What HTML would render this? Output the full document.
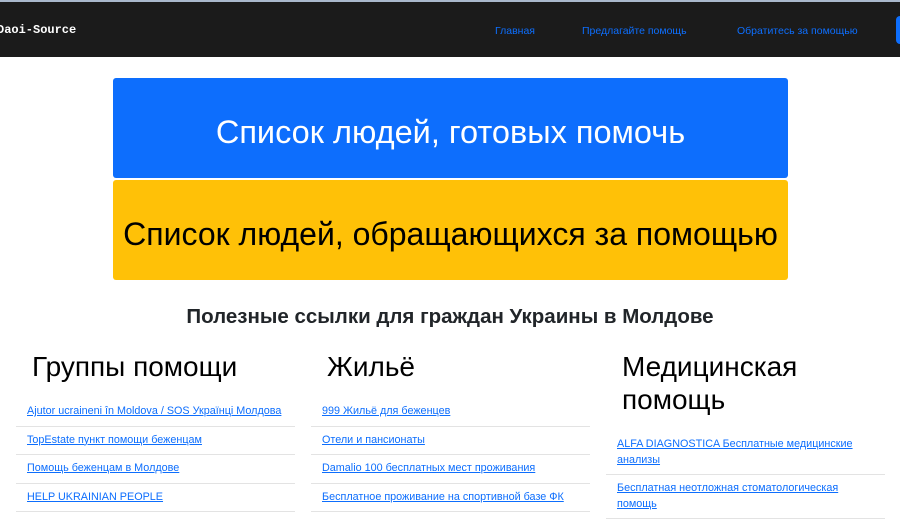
<!DOCTYPE html>
<html><head><meta charset="utf-8"><style>
*{margin:0;padding:0;box-sizing:border-box}
body{width:900px;height:505px;overflow:hidden;background:#fff;font-family:"Liberation Sans","DejaVu Sans",sans-serif;position:relative}
.nav{position:absolute;left:0;top:0;width:900px;height:57px;background:#1b1b1b;border-top:2px solid #a9b8cc}
.brand{position:absolute;left:-3px;top:21px;color:#fff;font:bold 12px "Liberation Mono",monospace}
.nav a{position:absolute;top:23px;color:#0d6efd;font-size:10.5px;text-decoration:none}
.btn{position:absolute;left:896px;top:14px;width:10px;height:28px;background:#0d6efd;border-radius:4px}
.box{position:absolute;left:113px;width:675px;height:100px;border-radius:3px;display:flex;align-items:center;justify-content:center;white-space:nowrap;padding-top:8px}
.b1{top:78px;background:#0d6efd;color:#fff;font-size:32.5px}
.b2{top:180px;background:#ffc107;color:#000;font-size:32px}
h3{position:absolute;top:305px;left:0;width:900px;text-align:center;font-size:20.5px;font-weight:bold;color:#212529}
.col{position:absolute;top:350px;width:279px}
.col h2{font-size:28px;font-weight:normal;color:#000;line-height:33px;padding-left:16px}
.col ul{list-style:none;margin-top:15px}
.col li{border-bottom:1px solid #e3e3e3;padding:6px 11px 6px;font-size:10.8px;line-height:15.5px}
.col li a{color:#0d6efd;text-decoration:underline}
</style></head><body>
<div class="nav">
<div class="brand">Daoi-Source</div>
<a style="left:495px">Главная</a>
<a style="left:582px">Предлагайте помощь</a>
<a style="left:737px">Обратитесь за помощью</a>
<div class="btn"></div>
</div>
<div class="box b1">Список людей, готовых помочь</div>
<div class="box b2">Список людей, обращающихся за помощью</div>
<h3>Полезные ссылки для граждан Украины в Молдове</h3>
<div class="col" style="left:16px"><h2>Группы помощи</h2><ul>
<li><a>Ajutor ucraineni în Moldova / SOS Українці Молдова</a></li>
<li><a>TopEstate пункт помощи беженцам</a></li>
<li><a>Помощь беженцам в Молдове</a></li>
<li><a>HELP UKRAINIAN PEOPLE</a></li></ul></div>
<div class="col" style="left:311px"><h2>Жильё</h2><ul>
<li><a>999 Жильё для беженцев</a></li>
<li><a>Отели и пансионаты</a></li>
<li><a>Damalio 100 бесплатных мест проживания</a></li>
<li><a>Бесплатное проживание на спортивной базе ФК</a></li></ul></div>
<div class="col" style="left:606px"><h2>Медицинская<br>помощь</h2><ul>
<li style="padding-right:5px"><a>ALFA DIAGNOSTICA Бесплатные медицинские анализы</a></li>
<li style="padding-right:40px"><a>Бесплатная неотложная стоматологическая помощь</a></li></ul></div>
</body></html>
